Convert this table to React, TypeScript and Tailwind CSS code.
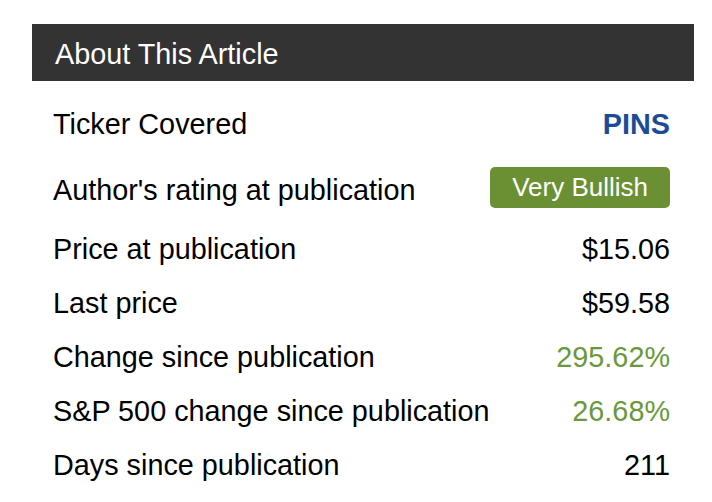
const rows: { label: string; value: string; tone?: 'green' | 'plain' }[] = [
  { label: 'Price at publication', value: '$15.06' },
  { label: 'Last price', value: '$59.58' },
  { label: 'Change since publication', value: '295.62%', tone: 'green' },
  { label: 'S&P 500 change since publication', value: '26.68%', tone: 'green' },
  { label: 'Days since publication', value: '211' },
];

export default function App() {
  return (
    <div className="min-h-screen bg-white pl-[32px] pt-[24px] font-['Liberation_Sans',Arial,sans-serif]">
      <div className="w-[662px]">
        {/* header */}
        <div className="flex h-[57px] items-center bg-[#333333] pl-[23px] pt-[4px] text-[28.8px] text-white">
          About This Article
        </div>

        <div className="pl-[21px] pr-[24px] pt-[17px] text-[28.8px] text-black">
          <div className="flex h-[54px] items-center justify-between">
            <span>Ticker Covered</span>
            <span className="font-bold text-[#1d4c95]">PINS</span>
          </div>

          <div className="mt-[7px] flex h-[64px] items-center justify-between">
            <span>Author's rating at publication</span>
            <span className="mb-[7px] flex h-[41px] items-center rounded-[5px] bg-[#6a9033] px-[22px] text-[26px] text-white">
              Very Bullish
            </span>
          </div>

          {rows.map((r) => (
            <div key={r.label} className="flex h-[54px] items-center justify-between">
              <span>{r.label}</span>
              <span className={r.tone === 'green' ? 'text-[#6b983b]' : 'text-black'}>{r.value}</span>
            </div>
          ))}
        </div>
      </div>
    </div>
  );
}
